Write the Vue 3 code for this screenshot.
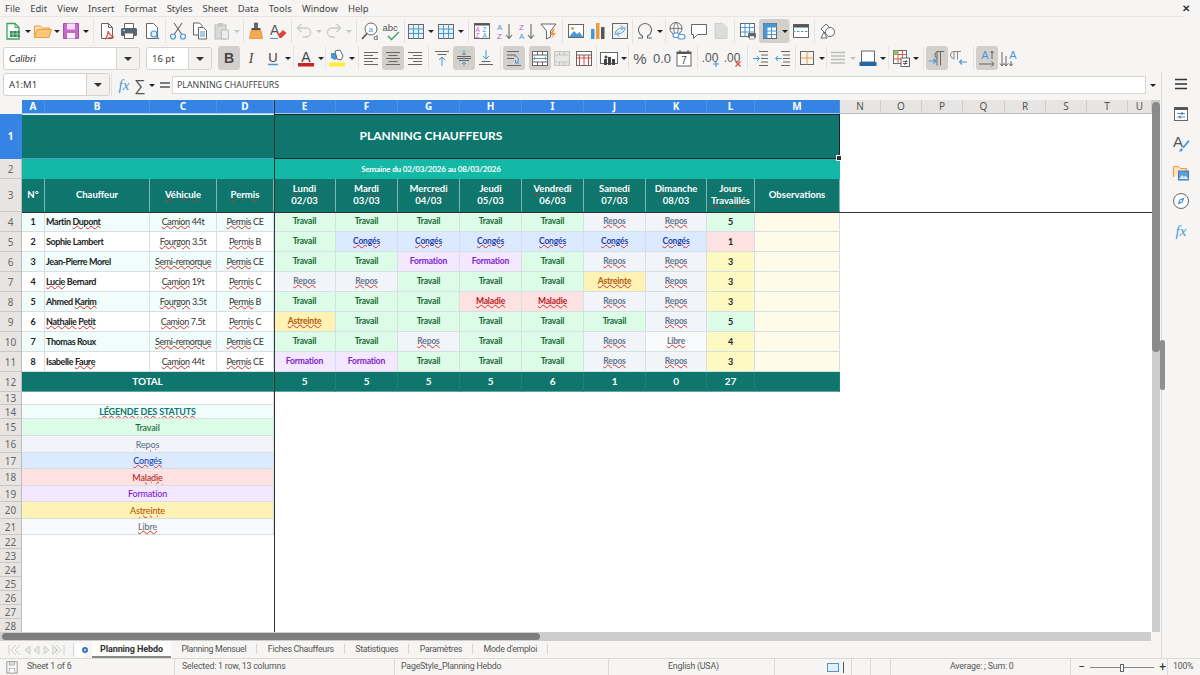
<script setup>
import { computed } from 'vue';

const menus = ['File', 'Edit', 'View', 'Insert', 'Format', 'Styles', 'Sheet', 'Data', 'Tools', 'Window', 'Help'];

const L = '#666';
const B = '#4a97d6';
const O = '#ee9a3c';

const icons = {
  new: `<path d="M5 3.500h8l4 4V19H5z" fill="#fff" stroke="#3fa35f" stroke-width="1.300"/><path d="M13 3.500v4h4" fill="none" stroke="#3fa35f"/><rect x="8" y="11" width="10" height="6" fill="#2f8f50"/><path d="M11 11v6M15 11v6M8 14h10" stroke="#bfe5cb" stroke-width=".7"/>`,
  open: `<path d="M2.500 17.500V6h6l2 2h7v2" fill="#fde3b5" stroke="${O}"/><path d="M2.500 17.500l2.500-8h14.500l-2.500 8z" fill="#fbc878" stroke="${O}"/>`,
  save: `<path d="M3.500 3.500h15v15h-15z" fill="#c56ac9" stroke="#a94fb0"/><rect x="7" y="3.500" width="8" height="6" fill="#f6dcf7"/><rect x="7" y="13" width="8" height="5.500" fill="#fbeffb"/>`,
  pdf: `<path d="M5.500 3.500h7l4 4v11h-11z" fill="#fff" stroke="${L}"/><path d="M12.500 3.500v4h4" fill="none" stroke="${L}"/><path d="M9 19c2-2 3-6 3-8 1 3 3 5 6 6-3 0-6 1-9 2z" fill="none" stroke="#d9483b" stroke-width="1.100"/>`,
  print: `<path d="M6.500 8V3.500h9V8" fill="#fff" stroke="${L}"/><rect x="3" y="8" width="16" height="8" rx="1.500" fill="#566573"/><rect x="6.500" y="13" width="9" height="5.500" fill="#fff" stroke="${L}"/><path d="M5 10.500h2" stroke="#cfe1ee"/>`,
  preview: `<path d="M5.500 3.500h7l4 4v11h-11z" fill="#fff" stroke="${L}"/><circle cx="13" cy="14" r="3" fill="#e3f0fa" stroke="${B}" stroke-width="1.200"/><path d="M15 16l3 3" stroke="${B}" stroke-width="1.400"/>`,
  cut: `<path d="M7 3l7.500 11M15 3L7.500 14" stroke="${L}" stroke-width="1.100"/><circle cx="6" cy="16.500" r="2.500" fill="none" stroke="${B}" stroke-width="1.200"/><circle cx="16" cy="16.500" r="2.500" fill="none" stroke="${B}" stroke-width="1.200"/>`,
  copy: `<path d="M4.500 3h6l2.500 2.500V15h-8.500z" fill="#fff" stroke="${L}"/><path d="M9.500 7.500h5l3 3V19h-8z" fill="#fff" stroke="${L}"/><path d="M11 12h5M11 14h5M11 16h5" stroke="${B}"/>`,
  paste: `<rect x="4" y="5" width="11" height="14" fill="#d9d9d7" stroke="#bbb"/><rect x="7" y="3" width="5" height="3.500" fill="#c6c6c4"/><path d="M10.500 10h7v9h-7z" fill="#eee" stroke="#bbb"/>`,
  clone: `<rect x="9" y="2.500" width="4" height="6" rx="1" fill="#6a6a6a"/><rect x="6.500" y="8" width="9" height="2.500" fill="#555"/><path d="M6 10.500h10l1.500 8h-13z" fill="#f3aa55" stroke="${O}"/>`,
  clear: `<text x="3" y="15" font-size="14" font-family="Liberation Sans" fill="#555">A</text><path d="M11 15l5-5 3.500 3-5 5h-2z" fill="#e0433a"/><path d="M3 18.500h8" stroke="${B}" stroke-width="1.200"/>`,
  undo: `<path d="M5 8h8a4.500 4.500 0 010 9h-3M8.500 4L4.500 8l4 4" fill="none" stroke="#cbcbc9" stroke-width="1.300"/>`,
  redo: `<path d="M17 8H9a4.500 4.500 0 000 9h3M13.500 4l4 4-4 4" fill="none" stroke="#cbcbc9" stroke-width="1.300"/>`,
  find: `<circle cx="12" cy="9" r="6" fill="#fff" stroke="${L}"/><path d="M8 13.500L3 19" stroke="#555" stroke-width="1.600"/><text x="9.500" y="11.500" font-size="8" font-family="Liberation Sans" fill="${B}">a</text><text x="14.500" y="20" font-size="8" font-family="Liberation Sans" fill="#444">d</text>`,
  spell: `<text x="1.500" y="11" font-size="9.500" font-family="Liberation Sans" fill="#555">abc</text><path d="M7 16l3.500 3.500L18 12" fill="none" stroke="#3fa35f" stroke-width="1.400"/>`,
  table: `<rect x="3.500" y="4.500" width="15" height="14" fill="#e6f1fa" stroke="${L}"/><path d="M3.500 9h15M3.500 13.500h15M8.500 4.500v14M13.500 4.500v14" stroke="${B}"/>`,
  sort: `<rect x="3.500" y="3.500" width="15" height="15" fill="#fff" stroke="${L}"/><rect x="3.500" y="3.500" width="15" height="2" fill="#555"/><text x="4.500" y="12" font-size="6.500" font-family="Liberation Sans" fill="#c060c0">A</text><text x="11.500" y="12" font-size="6.500" font-family="Liberation Sans" fill="${B}">Z</text><text x="4.500" y="18" font-size="6.500" font-family="Liberation Sans" fill="#c060c0">Z</text><text x="11.500" y="18" font-size="6.500" font-family="Liberation Sans" fill="${B}">A</text>`,
  asc: `<text x="3" y="10" font-size="8" font-family="Liberation Sans" fill="${B}">A</text><text x="3" y="19" font-size="8" font-family="Liberation Sans" fill="#c060c0">Z</text><path d="M15 4v14M12 15l3 3.500 3-3.500" fill="none" stroke="${L}" stroke-width="1.100"/>`,
  desc: `<text x="3" y="10" font-size="8" font-family="Liberation Sans" fill="#c060c0">Z</text><text x="3" y="19" font-size="8" font-family="Liberation Sans" fill="${B}">A</text><path d="M15 4v14M12 15l3 3.500 3-3.500" fill="none" stroke="${L}" stroke-width="1.100"/>`,
  filter: `<path d="M3 4h15l-5.500 7v6l-4 2v-8z" fill="#fff" stroke="${L}"/><path d="M15 9l-3 6h3l-2 4 5-6h-3l2-4z" fill="${O}"/>`,
  image: `<rect x="3.500" y="4.500" width="15" height="13" fill="#fff" stroke="${L}"/><path d="M4 17l5-6 3 3 2.500-2 3.500 5z" fill="${B}"/><circle cx="7.500" cy="8.500" r="1.500" fill="${O}"/>`,
  chart: `<rect x="4" y="9" width="3.500" height="10" fill="${B}"/><rect x="9" y="3" width="3.500" height="16" fill="${O}"/><rect x="14" y="7" width="3.500" height="12" fill="#555"/>`,
  pivot: `<rect x="3.500" y="3.500" width="15" height="15" fill="#f2f2f0" stroke="${L}"/><path d="M6 15c0-4 3-7 8-7M12 5.500l2.500 2.500-2.500 2.500M16 7c0 4-3 7-8 7M10 16.500L7.500 14l2.500-2.500" fill="none" stroke="${B}"/>`,
  omega: `<path d="M4 18h4.500v-2a6.500 6.500 0 115 0v2H18" fill="none" stroke="${L}" stroke-width="1.100"/>`,
  link: `<circle cx="10" cy="8.500" r="6" fill="none" stroke="${L}"/><path d="M4 8.500h12M10 2.500c-3 3-3 9 0 12M10 2.500c3 3 3 9 0 12" fill="none" stroke="${L}" stroke-width=".8"/><rect x="7" y="13" width="7" height="4.500" rx="2.200" fill="#fff" stroke="${B}" stroke-width="1.100"/><rect x="12" y="14.500" width="7" height="4.500" rx="2.200" fill="#fff" stroke="${B}" stroke-width="1.100"/>`,
  comment: `<path d="M3.500 4.500h15v10h-9l-4 4v-4h-2z" fill="#fff" stroke="${L}"/>`,
  header: `<path d="M5 3.500h8l4 4v11H5z" fill="#dcdcda" stroke="#cfcfcd"/>`,
  printarea: `<rect x="3.500" y="3.500" width="14" height="13" fill="#fff" stroke="${L}"/><path d="M3.500 7.500h14M8 3.500v13M12.500 3.500v13M3.500 12h14" stroke="${B}"/><rect x="11" y="13" width="8" height="5" rx="1" fill="#666"/><rect x="12.500" y="16" width="5" height="3" fill="#fff" stroke="#666" stroke-width=".6"/>`,
  freeze: `<rect x="4.500" y="3.500" width="13" height="15" fill="#fff" stroke="${L}"/><rect x="4.500" y="3.500" width="13" height="4" fill="${B}"/><rect x="4.500" y="3.500" width="4" height="15" fill="${B}"/><path d="M4.500 11h13M4.500 14.500h13M12.500 3.500v15" stroke="${B}"/>`,
  split: `<rect x="3.500" y="4.500" width="15" height="13" fill="#fff" stroke="${L}"/><rect x="3.500" y="4.500" width="15" height="3" fill="#555"/><path d="M3 11.500h16" stroke="${B}" stroke-dasharray="2.500 1.500"/>`,
  shapes: `<path d="M4 9l5-5 4 4-5 5z" fill="#fff" stroke="${L}"/><circle cx="13" cy="12" r="4.500" fill="#fff" stroke="${L}"/><path d="M4 18l3-6 3 6z" fill="#fff" stroke="${L}"/>`,
  bold: `<text x="11" y="16" text-anchor="middle" font-size="14" font-weight="700" font-family="Liberation Sans" fill="#444">B</text>`,
  italic: `<text x="11" y="16" text-anchor="middle" font-size="14" font-style="italic" font-family="Liberation Serif" fill="#444">I</text>`,
  under: `<text x="11" y="14.500" text-anchor="middle" font-size="13" font-family="Liberation Sans" fill="#444">U</text><path d="M6 17.500h10" stroke="${B}" stroke-width="1.400"/>`,
  color: `<text x="11" y="14.500" text-anchor="middle" font-size="14" font-family="Liberation Sans" fill="#444">A</text><rect x="3" y="16" width="16" height="3.500" fill="#c9211e"/>`,
  bgcolor: `<path d="M5 6h7v5l-3 2-4-2z" fill="${B}"/><path d="M9 4l5-1 3 6-2 4-4-1z" fill="#fff" stroke="${L}"/><rect x="3" y="15.500" width="16" height="4" fill="#ffee33"/>`,
  left: `<path d="M4 5.500h14M4 8.500h9M4 11.500h14M4 14.500h9M4 17.500h14" stroke="${L}"/>`,
  center: `<path d="M4 5.500h14M6.500 8.500h9M4 11.500h14M6.500 14.500h9M4 17.500h14" stroke="${L}"/>`,
  right: `<path d="M4 5.500h14M9 8.500h9M4 11.500h14M9 14.500h9M4 17.500h14" stroke="${L}"/>`,
  top: `<path d="M4 4.500h14M6.500 7.500h9" stroke="${L}"/><path d="M11 19v-9M8 13l3-3 3 3" fill="none" stroke="${B}"/>`,
  middle: `<path d="M4 9.500h14M4 11.500h14M6 13.500h10" stroke="${L}"/><path d="M11 3v5M9 6l2 2 2-2M11 19v-4M9 17l2-2 2 2" fill="none" stroke="${B}"/>`,
  bottom: `<path d="M4 17.500h14M6.500 14.500h9" stroke="${L}"/><path d="M11 3v9M8 9l3 3 3-3" fill="none" stroke="${B}"/>`,
  wrap: `<path d="M4 4.500h12M4 8h9M4 11.500h7M4 18.500h14" stroke="${L}"/><path d="M11 9c5 0 6 5 2 7M16 16h-3.500v-3" fill="none" stroke="${B}"/>`,
  merge: `<rect x="3.500" y="4.500" width="15" height="14" fill="#fff" stroke="${L}"/><path d="M3.500 8h15M3.500 15h15M8.500 4.500V8M13.500 4.500V8M8.500 15v3.500M13.500 15v3.500" stroke="${L}"/><path d="M5 11.500h12M6 10l-1.500 1.500L6 13M16 10l1.500 1.500L16 13" fill="none" stroke="${B}"/>`,
  mergeoff: `<rect x="3.500" y="4.500" width="15" height="14" fill="#e6e6e4" stroke="#c4c4c2"/><path d="M3.500 8h15M3.500 15h15M8.500 4.500V8M13.500 4.500V8M8.500 15v3.500M13.500 15v3.500" stroke="#c4c4c2"/>`,
  unmerge: `<rect x="3.500" y="4.500" width="15" height="14" fill="#fff" stroke="${L}"/><path d="M3.500 8h15" stroke="${L}"/><path d="M3.500 11h15M6.500 8v10.500M11 8v10.500M15.500 8v10.500" stroke="#d9483b"/>`,
  currency: `<rect x="2.500" y="5.500" width="17" height="11" fill="#fff" stroke="${L}"/><rect x="6" y="12" width="3" height="6" fill="#444"/><rect x="10" y="10" width="3" height="8" fill="#444"/><rect x="14" y="12" width="3" height="6" fill="#444"/><circle cx="8" cy="10" r="1.500" fill="#444"/>`,
  percent: `<text x="11" y="17" text-anchor="middle" font-size="15" font-family="Liberation Sans" fill="#555">%</text>`,
  number: `<text x="11" y="16" text-anchor="middle" font-size="13" font-family="Liberation Sans" fill="#555">0.0</text>`,
  date: `<rect x="4" y="5" width="14" height="14" fill="#fff" stroke="${L}"/><rect x="4" y="5" width="14" height="2" fill="#555"/><path d="M7 3v3M15 3v3" stroke="#555"/><text x="11" y="17" text-anchor="middle" font-size="10" font-family="Liberation Sans" fill="#444">7</text>`,
  adddec: `<text x="10" y="15" text-anchor="middle" font-size="12" font-family="Liberation Sans" fill="#555">.00</text><path d="M16 14v6M13 17h6" stroke="${B}" stroke-width="1.200"/>`,
  deldec: `<text x="10" y="15" text-anchor="middle" font-size="12" font-family="Liberation Sans" fill="#555">.00</text><path d="M13.500 14.500l5 5M18.500 14.500l-5 5" stroke="#d9483b" stroke-width="1.200"/>`,
  indent: `<path d="M9 4.500h9M11 8h7M11 11.500h7M11 15h7M9 18.500h9" stroke="${L}"/><path d="M3 11.500h6M7 9l2.500 2.500L7 14" fill="none" stroke="${B}"/>`,
  outdent: `<path d="M9 4.500h9M11 8h7M11 11.500h7M11 15h7M9 18.500h9" stroke="${L}"/><path d="M10 11.500H3.500M6 9l-2.500 2.500L6 14" fill="none" stroke="${B}"/>`,
  border: `<rect x="4.500" y="4.500" width="13" height="13" fill="none" stroke="${L}"/><path d="M11 4.500v13M4.500 11h13" stroke="${O}"/>`,
  bstyle: `<path d="M4 5.500h14M4 9h14M4 12.500h14M4 16h14" stroke="#bcbcba" stroke-width="1.500"/>`,
  bcolor: `<rect x="4.500" y="4" width="13" height="11" fill="#fff" stroke="${L}"/><rect x="2.500" y="15" width="17" height="4" fill="#1f6aa8"/>`,
  cond: `<rect x="3.500" y="3.500" width="13" height="13" fill="#fff" stroke="${L}"/><path d="M3.500 7.500h13M3.500 12h13M8 3.500v13M12.500 3.500v13" stroke="#e0584b"/><rect x="3.500" y="3.500" width="4.500" height="4" fill="#8ec76a"/><rect x="11" y="11" width="8.500" height="8.500" fill="#fff" stroke="${L}"/><path d="M13 14.500h4.500M13 16.500h4.500M16.500 13l-2 5" stroke="#444" stroke-width=".8"/>`,
  ltr: `<path d="M11 4.500v14M14.500 4.500v14M18 4.500H11a4 4 0 000 7" fill="none" stroke="${L}"/><path d="M3 14h7M7.500 11.500L10 14l-2.500 2.500" fill="none" stroke="${B}" stroke-width="1.100"/>`,
  rtl: `<path d="M6 4.500v8M9.500 4.500v8M13 4.500H6a3.500 3.500 0 000 7" fill="none" stroke="#888"/><path d="M19 15h-7M14 12.500L11.500 15l2.500 2.500" fill="none" stroke="${B}" stroke-width="1.100"/>`,
  horiz: `<text x="9" y="12" text-anchor="middle" font-size="11" font-family="Liberation Sans" fill="${B}">A</text><path d="M3 17h15M15.500 14.500l2.500 2.500-2.500 2.500M16 4v8M14.500 6l1.500-2 1.500 2" fill="none" stroke="${L}"/>`,
  vert: `<text x="15" y="12" text-anchor="middle" font-size="11" font-family="Liberation Sans" fill="${B}">A</text><path d="M4 5v14M2 16.500L4 19l2-2.500M8 9v10M6 16.500L8 19l2-2.500M13 14v5M11 16.500l2 2.500 2-2.500" fill="none" stroke="${L}"/>`,
  menu: `<path d="M5 6.500h12M5 11h12M5 15.500h12" stroke="#333" stroke-width="1.600"/>`,
  props: `<rect x="4.500" y="4.500" width="13" height="13" fill="#fff" stroke="${L}"/><rect x="4.500" y="4.500" width="13" height="2.500" fill="#555"/><path d="M7 10.500h8M7 14h8" stroke="${B}"/><path d="M12 9v3M10 12.500v3" stroke="#555"/>`,
  styles: `<text x="8" y="15" text-anchor="middle" font-size="15" font-family="Liberation Sans" fill="#555">A</text><path d="M18.500 8l-6 7 1 1.500 6-7zM11 16l2 1.500-1.500 2H9z" fill="${B}"/>`,
  gallery: `<path d="M3.500 16V5.500h5l2 2h6V10" fill="#fde3b5" stroke="${O}"/><rect x="8.500" y="10" width="10" height="9" fill="#5a9fd4" stroke="#3f7fb0"/><path d="M9 18l3-4 2 2 1.500-1.500 3 3.500z" fill="#d5e9f7"/>`,
  nav: `<circle cx="11" cy="11" r="7.500" fill="#fff" stroke="${L}"/><path d="M14.500 7.500l-2 5-5 2 2-5z" fill="${B}"/><circle cx="11" cy="11" r="1" fill="#fff"/>`,
  fx: `<text x="11" y="16" text-anchor="middle" font-size="15" font-style="italic" font-family="Liberation Serif" fill="${B}">fx</text>`,
  sigma: `<text x="11" y="16.500" text-anchor="middle" font-size="16" font-family="Liberation Sans" fill="#555">∑</text>`,
  equal: `<path d="M6 9h10M6 13h10" stroke="#555" stroke-width="1.500"/>`,
  saved: `<rect x="3.500" y="3.500" width="13" height="14" fill="none" stroke="#888"/><rect x="7" y="3.500" width="6" height="4" fill="#ddd" stroke="#888" stroke-width=".6"/><rect x="6.500" y="12" width="7" height="5.500" fill="#fff" stroke="#888" stroke-width=".6"/>`
};

const parseBar = (src) => {
  const tokens = src.split(' ');
  return tokens.map((tok, index) => {
    const on = tok[0] === '*';
    const off = tok[0] === '~';
    const name = on || off ? tok.slice(1) : tok;
    const width = Number(name.replace(/^\D+/, ''));
    if (/^s\d+$/.test(name)) return { kind: 'sep', width, index };
    if (/^g\d+$/.test(name)) return { kind: 'gap', width, index };
    if (/^v\d+$/.test(name)) return { kind: 'drop', width, on, off, index };
    return { kind: 'btn', width: 22, name, on, off, joined: on && /^\*v/.test(tokens[index + 1] || ''), index };
  });
};

const barOne = parseBar(
  'new v8 open v6 save v8 s6 pdf print g1 preview s4 cut copy ~paste ~v8 s4 clone clear s4 ~undo ~v8 ~redo ~v8 s6 find spell s2 table v8 table v8 s6 sort g1 asc desc filter s5 image chart pivot s3 omega v8 s2 link comment ~header s5 printarea *freeze *v8 s1 split s5 shapes'
);
const barTwo = parseBar(
  '*bold italic under v8 s3 color v8 s1 bgcolor v8 s4 left *center right s5 top *middle bottom s6 *wrap g4 *merge mergeoff unmerge s3 currency v8 s1 percent number date s5 adddec deldec s6 indent outdent s2 border v8 s1 bstyle ~v8 bcolor v8 s3 cond v8 s6 *ltr rtl s6 *horiz vert'
);

const sideIcons = ['props', 'styles', 'gallery', 'nav', 'fx'];

const columns = 'ABCDEFGHIJKLMNOPQRSTU'.split('');
const rows = Array.from({ length: 28 }, (_, i) => i + 1);
const selectedCols = 13;

const statusInfo = {
  T: { label: 'Travail', cls: 'st-t' },
  R: { label: '~Repos', cls: 'st-r' },
  C: { label: '~Congés', cls: 'st-c' },
  M: { label: '~Maladie', cls: 'st-m' },
  F: { label: 'Formation', cls: 'st-f' },
  A: { label: '~Astreinte', cls: 'st-a' },
  L: { label: '~Libre', cls: 'st-l' }
};

const drivers = [
  ['Martin ~Dupont', '~Camion 44t', '~Permis CE', 'TTTTTRR', 5],
  ['Sophie Lambert', '~Fourgon 3.5t', '~Permis B', 'TCCCCCC', 1],
  ['Jean-Pierre Morel', '~Semi-remorque', '~Permis CE', 'TTFFTRR', 3],
  ['~Lucie Bernard', '~Camion 19t', '~Permis C', 'RRTTTAR', 3],
  ['Ahmed ~Karim', '~Fourgon 3.5t', '~Permis B', 'TTTMMRR', 3],
  ['~Nathalie ~Petit', '~Camion 7.5t', '~Permis C', 'ATTTTTR', 5],
  ['Thomas Roux', '~Semi-remorque', '~Permis CE', 'TTRTTRL', 4],
  ['Isabelle ~Faure', '~Camion 44t', '~Permis CE', 'FFTTTRR', 3]
];

const days = [
  ['~Lundi', '02/03'],
  ['~Mardi', '03/03'],
  ['~Mercredi', '04/03'],
  ['~Jeudi', '05/03'],
  ['~Vendredi', '06/03'],
  ['~Samedi', '07/03'],
  ['~Dimanche', '08/03']
];

const totals = [5, 5, 5, 5, 6, 1, 0, 27];

const daysClass = (n) => {
  if (n >= 5) return 'st-t';
  if (n <= 2) return 'st-m';
  return 'days-mid';
};

// col is 1-based over A..U, the row header column comes before it
const cell = (row, col, span, cls, ...lines) => ({ row, col, span, cls, lines, key: `${row}-${col}` });

const cells = computed(() => {
  const out = [];
  out.push(cell(1, 1, 13, 'title', 'PLANNING CHAUFFEURS'));
  out.push(cell(2, 1, 13, 'week', '~Semaine du 02/03/2026 ~au 08/03/2026'));

  out.push(cell(3, 1, 1, 'head big', 'N°'));
  out.push(cell(3, 2, 1, 'head big', 'Chauffeur'));
  out.push(cell(3, 3, 1, 'head', '~Véhicule'));
  out.push(cell(3, 4, 1, 'head', '~Permis'));
  days.forEach((d, i) => out.push(cell(3, 5 + i, 1, 'head', d[0], d[1])));
  out.push(cell(3, 12, 1, 'head', '~Jours', '~Travaillés'));
  out.push(cell(3, 13, 1, 'head', 'Observations'));

  drivers.forEach((d, i) => {
    const row = 4 + i;
    const tint = i % 2 === 0 ? 'tint' : 'plain';
    out.push(cell(row, 1, 1, `num ${tint}`, String(i + 1)));
    out.push(cell(row, 2, 1, `name ${tint}`, d[0]));
    out.push(cell(row, 3, 1, `info ${tint}`, d[1]));
    out.push(cell(row, 4, 1, `info ${tint}`, d[2]));
    d[3].split('').forEach((s, j) => {
      out.push(cell(row, 5 + j, 1, `status ${statusInfo[s].cls}`, statusInfo[s].label));
    });
    out.push(cell(row, 12, 1, `count ${daysClass(d[4])}`, String(d[4])));
    out.push(cell(row, 13, 1, 'obs', ''));
  });

  out.push(cell(12, 1, 4, 'total', 'TOTAL'));
  totals.forEach((n, i) => out.push(cell(12, 5 + i, 1, 'total', String(n))));
  out.push(cell(12, 13, 1, 'total', ''));

  out.push(cell(13, 1, 4, 'blank', ''));
  out.push(cell(14, 1, 4, 'legend-title', '~LÉGENDE ~DES ~STATUTS'));
  'TRCMFAL'.split('').forEach((s, i) => {
    out.push(cell(15 + i, 1, 4, `legend ${statusInfo[s].cls}`, statusInfo[s].label));
  });
  return out;
});

// "~word" marks a word the spell checker underlines
const parts = (line) =>
  line.split(' ').map((word, i, all) => ({
    sq: word[0] === '~',
    text: word.replace('~', ''),
    gap: i < all.length - 1 ? ' ' : ''
  }));

const tabs = ['Planning Hebdo', 'Planning Mensuel', 'Fiches Chauffeurs', 'Statistiques', 'Paramètres', "Mode d'emploi"];
</script>

<template>
  <div class="app">
    <div class="menubar">
      <span v-for="m in menus" :key="m">{{ m }}</span>
      <span class="close">✕</span>
    </div>

    <div class="toolbar bar-one">
      <template v-for="item in barOne" :key="item.index">
        <span v-if="item.kind === 'sep'" class="sep" :style="{ width: item.width + 'px' }"><i></i></span>
        <span v-else-if="item.kind === 'gap'" :style="{ width: item.width + 'px' }"></span>
        <span
          v-else-if="item.kind === 'drop'"
          class="drop"
          :class="{ on: item.on, off: item.off }"
          :style="{ width: item.width + 'px' }"
        ></span>
        <svg
          v-else
          class="btn"
          :class="{ on: item.on, joined: item.joined }"
          viewBox="0 0 22 22"
          v-html="icons[item.name]"
        ></svg>
      </template>
    </div>

    <div class="toolbar bar-two">
      <div class="combo font-box">
        <span class="combo-text">Calibri</span>
        <span class="combo-arrow"></span>
      </div>
      <div class="combo size-box">
        <span class="combo-text">16 pt</span>
        <span class="combo-arrow"></span>
      </div>
      <template v-for="item in barTwo" :key="item.index">
        <span v-if="item.kind === 'sep'" class="sep" :style="{ width: item.width + 'px' }"><i></i></span>
        <span v-else-if="item.kind === 'gap'" :style="{ width: item.width + 'px' }"></span>
        <span
          v-else-if="item.kind === 'drop'"
          class="drop"
          :class="{ on: item.on, off: item.off }"
          :style="{ width: item.width + 'px' }"
        ></span>
        <svg
          v-else
          class="btn"
          :class="{ on: item.on, joined: item.joined }"
          viewBox="0 0 22 22"
          v-html="icons[item.name]"
        ></svg>
      </template>
    </div>

    <div class="body">
      <div class="main">
        <div class="formula">
          <div class="combo name-box">
            <span class="combo-text">A1:M1</span>
            <span class="combo-arrow"></span>
          </div>
          <span class="sep formula-sep"><i></i></span>
          <svg class="btn fx" viewBox="0 0 22 22" v-html="icons.fx"></svg>
          <svg class="btn sigma" viewBox="0 0 22 22" v-html="icons.sigma"></svg>
          <span class="drop formula-drop"></span>
          <svg class="btn equal" viewBox="0 0 22 22" v-html="icons.equal"></svg>
          <div class="formula-input">PLANNING CHAUFFEURS</div>
          <span class="drop formula-end"></span>
        </div>

        <div class="sheet-area">
          <div class="sheet">
            <div class="grid">
              <div class="corner"></div>
              <div
                v-for="(c, i) in columns"
                :key="c"
                class="col-head"
                :class="{ selected: i < selectedCols }"
                :style="{ gridColumn: i + 2 }"
              >
                {{ c }}
              </div>
              <div
                v-for="r in rows"
                :key="r"
                class="row-head"
                :class="{ selected: r === 1 }"
                :style="{ gridRow: r + 1 }"
              >
                {{ r }}
              </div>
              <div
                v-for="c in cells"
                :key="c.key"
                class="cell"
                :class="c.cls"
                :style="{ gridRow: c.row + 1, gridColumn: `${c.col + 1} / span ${c.span}` }"
              >
                <div v-for="(line, i) in c.lines" :key="i" class="line">
                  <template v-for="(p, j) in parts(line)" :key="j"
                    ><span :class="{ sq: p.sq }">{{ p.text }}</span
                    >{{ p.gap }}</template
                  >
                </div>
              </div>
            </div>
            <div class="select-left"></div>
            <div class="select-frame"><span class="handle"></span></div>
            <div class="freeze-v"></div>
            <div class="freeze-h"></div>
          </div>
          <div class="vscroll"><span class="vthumb"></span></div>
        </div>

        <div class="hscroll"><span class="hthumb"></span></div>

        <div class="tabbar">
          <div class="tab-nav">
            <svg viewBox="0 0 60 14" width="60" height="14">
              <path d="M3 2v10M10 2L5 7l5 5M14 2L9 7l5 5" fill="none" stroke="#cfcfcd" />
              <path d="M24 3l-5 4 5 4zM33 3l-5 4 5 4z" fill="#e8e8e6" stroke="#cfcfcd" />
              <path d="M38 3l5 4-5 4zM47 3l5 4-5 4z" fill="#e8e8e6" stroke="#cfcfcd" />
              <path d="M46 2l5 5-5 5M50 2l5 5-5 5M58 2v10" fill="none" stroke="#cfcfcd" />
            </svg>
          </div>
          <span class="tab-add"><u></u><i></i></span>
          <div
            v-for="(t, i) in tabs"
            :key="t"
            class="tab"
            :class="{ active: i === 0 }"
          >
            {{ t }}
          </div>
        </div>
      </div>

      <aside class="sidebar">
        <span class="side-handle"></span>
        <svg class="side-menu" viewBox="0 0 22 22" v-html="icons.menu"></svg>
        <svg v-for="s in sideIcons" :key="s" class="side-icon" viewBox="0 0 22 22" v-html="icons[s]"></svg>
      </aside>
    </div>

    <div class="statusbar">
      <svg class="stat-save" viewBox="0 0 20 20" v-html="icons.saved"></svg>
      <span class="stat s-sheet">Sheet 1 of 6</span>
      <span class="stat s-sel">Selected: 1 row, 13 columns</span>
      <span class="stat s-page">PageStyle_Planning Hebdo</span>
      <span class="stat s-lang">English (USA)</span>
      <span class="stat s-mode">
        <i class="mode-box"></i>
        <i class="mode-cursor"></i>
      </span>
      <span class="stat s-a"></span>
      <span class="stat s-b"></span>
      <span class="stat s-sum">Average: ; Sum: 0</span>
      <span class="stat s-zoom">
        <b>−</b>
        <i class="slider"><i class="knob"></i></i>
        <b>+</b>
      </span>
      <span class="stat s-pct">100%</span>
    </div>
  </div>
</template>

<style>
html,
body {
  margin: 0;
  background: #f6f5f4;
}
</style>

<style scoped>
.app {
  width: 1200px;
  height: 675px;
  overflow: hidden;
  background: #f6f5f4;
  color: #3d3d3d;
  font-family: 'Noto Sans', 'Open Sans', sans-serif;
  font-size: 10px;
  display: flex;
  flex-direction: column;
}

.menubar {
  height: 17px;
  margin-bottom: 1px;
  display: flex;
  align-items: center;
  gap: 10px;
  padding-left: 5px;
  font-size: 9.500px;
  color: #444;
  border-bottom: 1px solid #e8e6e3;
  box-sizing: border-box;
  margin-right: 16px;
  position: relative;
}

.close {
  position: absolute;
  right: -6px;
  top: 1px;
  font-size: 10px;
  font-weight: 700;
  color: #333;
}

.toolbar {
  display: flex;
  align-items: center;
  padding-left: 2px;
}

.bar-one {
  height: 26px;
}

.bar-two {
  height: 28px;
  padding-left: 3px;
}

.btn {
  width: 22px;
  height: 24px;
  flex: none;
  border-radius: 3px;
}

.btn.on {
  background: #d3d0cc;
}

.btn.joined {
  border-radius: 3px 0 0 3px;
}

.drop {
  height: 24px;
  flex: none;
  position: relative;
  display: block;
}

.drop.on {
  background: #d3d0cc;
  border-radius: 0 3px 3px 0;
}

.drop::after {
  content: '';
  position: absolute;
  left: 50%;
  top: 11px;
  margin-left: -3px;
  border-left: 3px solid transparent;
  border-right: 3px solid transparent;
  border-top: 3px solid #222;
}

.drop.off::after {
  border-top-color: #c4c4c2;
}

.sep {
  height: 24px;
  flex: none;
  display: flex;
  justify-content: center;
}

.sep i {
  width: 1px;
  height: 100%;
  background: #e6e4e1;
}

.combo {
  flex: none;
  height: 23px;
  display: flex;
  box-sizing: border-box;
  background: #fff;
  border: 1px solid #d5d1cc;
  border-radius: 3px;
}

.combo-text {
  flex: 1;
  padding-left: 5px;
  line-height: 21px;
}

.combo-arrow {
  width: 22px;
  background: #f4f2f0;
  border-left: 1px solid #d5d1cc;
  border-radius: 0 3px 3px 0;
  position: relative;
}

.combo-arrow::after {
  content: '';
  position: absolute;
  left: 7px;
  top: 9px;
  border-left: 4px solid transparent;
  border-right: 4px solid transparent;
  border-top: 4px solid #333;
}

.font-box {
  width: 137px;
  margin-right: 6px;
}

.font-box .combo-text {
  font-style: italic;
  font-family: Lato, sans-serif;
  font-size: 10px;
}

.size-box {
  width: 66px;
  margin-right: 6px;
}

.size-box .combo-text {
  font-size: 9.500px;
}

.body {
  flex: 1;
  display: flex;
  min-height: 0;
}

.main {
  width: 1161px;
  flex: none;
  display: flex;
  flex-direction: column;
}

.formula {
  height: 28px;
  flex: none;
  display: flex;
  align-items: center;
  padding-left: 3px;
  box-sizing: border-box;
  padding-bottom: 3px;
}

.name-box {
  width: 107px;
}

.name-box .combo-text {
  font-size: 9.500px;
}

.formula-sep {
  width: 3px;
}

.sigma {
  margin-left: -6px;
}

.formula-drop {
  width: 7px;
  margin-left: -3px;
}

.equal {
  margin-left: -1px;
}

.formula-input {
  width: 974px;
  height: 18px;
  margin-left: -4px;
  box-sizing: border-box;
  background: #fff;
  border: 1px solid #dad7d3;
  padding-left: 4px;
  font-size: 8.800px;
  line-height: 16px;
  color: #444;
}

.formula-end {
  width: 14px;
}

.sheet-area {
  height: 532px;
  flex: none;
  display: flex;
  position: relative;
}

.sheet {
  width: 1152px;
  flex: none;
  overflow: hidden;
  position: relative;
  background: #fff;
}

.grid {
  display: grid;
  grid-template-columns: 22px 23px 105px 67px 57px 62px 62px 62px 62px 62px 62px 61px 48px 85px 41px 41px 41px 42px 41px 41px 41px 24px;
  grid-template-rows: 14px 45px 20px 33px repeat(9, 20px) 13px 14px 17px 17px 16px 17px 16px 17px 16px repeat(7, 14px);
}

.corner {
  grid-row: 1;
  grid-column: 1;
  background: #f6f5f4;
}

.col-head {
  grid-row: 1;
  background: #e6e5e3;
  border-right: 1px solid #cfcecc;
  border-bottom: 1px solid #bdbcba;
  box-sizing: border-box;
  text-align: center;
  line-height: 13px;
  font-size: 10px;
  color: #555;
  overflow: hidden;
}

.col-head.selected {
  background: #3584e4;
  border-right-color: #4f90e0;
  color: #fff;
  font-weight: 700;
  border-bottom-color: #a9c8ee;
}

.row-head {
  grid-column: 1;
  background: #e6e5e3;
  border-bottom: 1px solid #c9c8c6;
  border-right: 1px solid #bdbcba;
  box-sizing: border-box;
  display: flex;
  align-items: center;
  justify-content: center;
  font-size: 10px;
  color: #666;
}

.row-head.selected {
  background: #3584e4;
  color: #fff;
  font-weight: 700;
  border-color: #3584e4;
}

.cell {
  box-sizing: border-box;
  display: flex;
  flex-direction: column;
  align-items: center;
  justify-content: center;
  font-family: Lato, 'Liberation Sans', sans-serif;
  font-size: 9px;
  line-height: 11px;
  white-space: pre;
  overflow: hidden;
  border-right: 1px solid #d4e0e2;
  border-bottom: 1px solid #d4e0e2;
  letter-spacing: -0.15px;
}

.sq {
  text-decoration: underline wavy #d5302a 1px;
  text-underline-offset: 0;
}

.title {
  background: #0f766e;
  color: #fff;
  font-size: 12px;
  font-weight: 700;
  border: none;
  letter-spacing: 0;
  padding-bottom: 2px;
}

.week {
  background: #14b8a6;
  color: #fff;
  font-size: 8px;
  font-weight: 700;
  border: none;
}

.head {
  background: #0f766e;
  color: #fff;
  font-size: 9.500px;
  font-weight: 700;
  line-height: 12px;
  border-right: 1px solid #7fb5ae;
  border-bottom: 1px solid #0f766e;
  padding: 0 0 1px;
  letter-spacing: 0;
}

.head.big {
  font-size: 9.500px;
}

.tint {
  background: #f0fdfa;
}

.plain {
  background: #fff;
}

.num {
  font-weight: 700;
  color: #222;
}

.name {
  align-items: flex-start;
  padding-left: 1px;
  font-weight: 700;
  color: #222;
  letter-spacing: -0.4px;
}

.info {
  color: #333;
  letter-spacing: -0.35px;
}

.status {
  font-weight: 700;
  font-size: 8.500px;
}

.st-t {
  background: #dcfce7;
  color: #166534;
}

.st-r {
  background: #f1f5f9;
  color: #64748b;
}

.st-c {
  background: #dbeafe;
  color: #1e40af;
}

.st-m {
  background: #fee2e2;
  color: #b91c1c;
}

.st-f {
  background: #f3e8ff;
  color: #7e22ce;
}

.st-a {
  background: #fef3b4;
  color: #b45309;
}

.st-l {
  background: #f8fafc;
  color: #6b7280;
}

.count {
  font-weight: 700;
  color: #222;
}

.count.st-t,
.count.st-m {
  color: #222;
}

.days-mid {
  background: #fef9c3;
}

.obs {
  background: #fefce8;
}

.total {
  background: #0f766e;
  color: #fff;
  font-weight: 700;
  font-size: 10px;
  border-right: 1px solid #1b8278;
  border-bottom: 1px solid #5ea69e;
}

.blank {
  background: #fff;
}

.legend-title {
  background: #f0fdfa;
  color: #0f766e;
  font-weight: 700;
  font-size: 9px;
}

.legend {
  font-size: 9px;
  font-weight: 500;
}

.select-left {
  position: absolute;
  left: 22px;
  top: 14px;
  width: 252px;
  height: 45px;
  box-sizing: border-box;
  border-top: 1px solid #e6f3f8;
  border-bottom: 1px solid #5a9bc0;
}

.select-frame {
  position: absolute;
  left: 274px;
  top: 14px;
  width: 566px;
  height: 45px;
  box-sizing: border-box;
  border: 1px solid #1a2a2a;
}

.handle {
  position: absolute;
  right: -3px;
  bottom: -3px;
  width: 4px;
  height: 4px;
  background: #333;
  border: 1px solid #fff;
}

.freeze-v {
  position: absolute;
  left: 274px;
  top: 0;
  bottom: 0;
  width: 1px;
  background: #333;
}

.freeze-h {
  position: absolute;
  left: 22px;
  right: 0;
  top: 112px;
  height: 1px;
  background: #333;
}

.vscroll {
  width: 8px;
  flex: none;
  background: #cdcdcd;
  position: relative;
}

.vthumb {
  position: absolute;
  left: 0;
  right: 0;
  top: 2px;
  height: 250px;
  background: #8a8a8a;
  border-radius: 4px;
}

.hscroll {
  height: 9px;
  flex: none;
  width: 1151px;
  background: #cdcdcd;
  position: relative;
}

.hthumb {
  position: absolute;
  left: 2px;
  top: 1px;
  width: 538px;
  height: 7px;
  background: #7d7d7d;
  border-radius: 4px;
}

.tabbar {
  height: 17px;
  flex: none;
  display: flex;
  align-items: center;
  font-family: Roboto, 'Noto Sans', sans-serif;
  font-size: 8.800px;
  letter-spacing: -0.3px;
  color: #555;
}

.tab-nav {
  width: 74px;
  padding-left: 6px;
  box-sizing: border-box;
  display: flex;
  border-right: 1px solid #d8d6d3;
  height: 14px;
}

.tab-add {
  width: 17px;
  height: 16px;
  display: flex;
  align-items: center;
  margin-right: 1px;
  padding-left: 1px;
  box-sizing: border-box;
}

.tab-add u {
  width: 9px;
  height: 14px;
  background: #fff;
}

.tab-add i {
  width: 2px;
  height: 2px;
  border-radius: 50%;
  border: 2px solid #2f78c4;
  margin-left: -2px;
}

.tab {
  padding: 0 11px 0 10.500px;
  height: 100%;
  line-height: 16px;
  box-sizing: border-box;
  white-space: nowrap;
  position: relative;
}

.tab::after {
  content: '';
  position: absolute;
  right: 0;
  top: 3px;
  height: 10px;
  width: 1px;
  background: #d8d6d3;
}

.tab.active {
  background: #fdfdfc;
  font-weight: 700;
  font-size: 9px;
  letter-spacing: -0.1px;
  color: #333;
  padding: 0 8px;
  border-bottom: 2px solid #8a8a8a;
}

.tab.active::after {
  display: none;
}

.sidebar {
  flex: 1;
  border-left: 1px solid #dcdad7;
  position: relative;
  display: flex;
  flex-direction: column;
  align-items: center;
  padding-top: 1px;
}

.side-handle {
  position: absolute;
  left: -2px;
  top: 268px;
  width: 5px;
  height: 50px;
  background: #8f8f8f;
  border-radius: 2px;
}

.side-menu {
  width: 22px;
  height: 22px;
  margin-bottom: 7.500px;
}

.side-icon {
  width: 22px;
  height: 22px;
  margin-bottom: 7.300px;
}

.statusbar {
  height: 17px;
  flex: none;
  display: flex;
  align-items: center;
  border-top: 1px solid #dcdad7;
  box-sizing: border-box;
  font-family: Roboto, 'Noto Sans', sans-serif;
  font-size: 8.800px;
  letter-spacing: -0.2px;
  color: #555;
}

.stat-save {
  width: 16px;
  height: 16px;
  margin-left: 4px;
  flex: none;
}

.stat {
  height: 100%;
  box-sizing: border-box;
  border-right: 1px solid #dcdad7;
  flex: none;
  line-height: 15px;
  white-space: nowrap;
}

.s-sheet {
  width: 155px;
  padding-left: 7px;
}

.s-sel {
  width: 220px;
  padding-left: 7px;
}

.s-page {
  width: 214px;
  padding-left: 6px;
}

.s-lang {
  width: 166px;
  padding-left: 59px;
}

.s-mode {
  width: 77px;
  display: flex;
  align-items: center;
  padding-left: 52px;
  gap: 2px;
}

.mode-box {
  width: 10px;
  height: 7px;
  border: 1px solid #4e96cc;
  background: #e3f0fa;
}

.mode-cursor {
  width: 3px;
  height: 11px;
  border-left: 1px solid #555;
  margin-left: 2px;
}

.s-a {
  width: 19px;
}

.s-b {
  width: 20px;
}

.s-sum {
  width: 180px;
  padding-left: 59px;
}

.s-zoom {
  width: 97px;
  display: flex;
  align-items: center;
  padding-left: 7px;
  gap: 3px;
  font-size: 12px;
}

.s-zoom b {
  font-weight: 400;
  color: #333;
  width: 7px;
  text-align: center;
}

.slider {
  width: 64px;
  height: 1px;
  background: #888;
  position: relative;
  margin: 0 2px;
}

.knob {
  position: absolute;
  left: 30px;
  top: -3px;
  width: 2px;
  height: 6px;
  background: #f6f5f4;
  border: 1px solid #666;
}

.s-pct {
  border: none;
  padding-left: 5px;
}

.line {
  white-space: pre;
}
</style>
